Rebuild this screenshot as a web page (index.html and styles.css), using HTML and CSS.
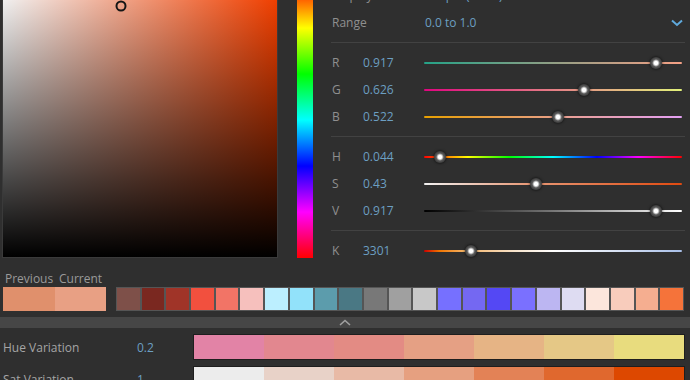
FILE: index.html
```html
<!DOCTYPE html>
<html lang="en">
<head>
    <meta charset="UTF-8">
    <meta name="viewport" content="width=device-width, initial-scale=1.0">
    <title>Color Picker</title>
    <link rel="stylesheet" href="styles.css">
</head>
<body>
    <div class="editor">
        <div class="top">
            <div class="sv">
                <span class="sv-cursor" style="left: 43%; top: 8.3%"></span>
            </div>
            <div class="hue"></div>
            <div class="props">
                <div class="prow">
                    <span class="plabel wide">Display</span>
                    <span class="pvalue">Simple (sRGB)</span>
                </div>
                <div class="prow">
                    <span class="plabel wide">Range</span>
                    <span class="pvalue grow">0.0 to 1.0</span>
                    <svg class="chevron" width="12" height="8" viewBox="0 0 12 8">
                        <polyline points="1,1.5 6,6 11,1.5" fill="none" stroke="#5fa9dc" stroke-width="2"/>
                    </svg>
                </div>
                <div class="divider"></div>
                <div class="prow">
                    <span class="plabel">R</span>
                    <span class="pvalue num">0.917</span>
                    <div class="slider track-r"><span class="thumb" style="--v: 0.917"></span></div>
                </div>
                <div class="prow">
                    <span class="plabel">G</span>
                    <span class="pvalue num">0.626</span>
                    <div class="slider track-g"><span class="thumb" style="--v: 0.626"></span></div>
                </div>
                <div class="prow">
                    <span class="plabel">B</span>
                    <span class="pvalue num">0.522</span>
                    <div class="slider track-b"><span class="thumb" style="--v: 0.522"></span></div>
                </div>
                <div class="divider"></div>
                <div class="prow">
                    <span class="plabel">H</span>
                    <span class="pvalue num">0.044</span>
                    <div class="slider track-h"><span class="thumb" style="--v: 0.044"></span></div>
                </div>
                <div class="prow">
                    <span class="plabel">S</span>
                    <span class="pvalue num">0.43</span>
                    <div class="slider track-s"><span class="thumb" style="--v: 0.43"></span></div>
                </div>
                <div class="prow">
                    <span class="plabel">V</span>
                    <span class="pvalue num">0.917</span>
                    <div class="slider track-v"><span class="thumb" style="--v: 0.917"></span></div>
                </div>
                <div class="divider"></div>
                <div class="prow">
                    <span class="plabel">K</span>
                    <span class="pvalue num">3301</span>
                    <div class="slider track-k"><span class="thumb" style="--v: 0.17"></span></div>
                </div>
            </div>
        </div>

        <div class="history">
            <div class="prevcur">
                <div class="pc-labels">
                    <span class="pc-label first">Previous</span>
                    <span class="pc-label">Current</span>
                </div>
                <div class="pc-box">
                    <div class="prev"></div>
                    <div class="cur"></div>
                </div>
            </div>
            <div class="swatches">
                <div class="swatch" style="background: #7e5049"></div>
                <div class="swatch" style="background: #7a2820"></div>
                <div class="swatch" style="background: #a03428"></div>
                <div class="swatch" style="background: #f2503e"></div>
                <div class="swatch" style="background: #f27466"></div>
                <div class="swatch" style="background: #f6c0bd"></div>
                <div class="swatch" style="background: #bcefff"></div>
                <div class="swatch" style="background: #92e2fa"></div>
                <div class="swatch" style="background: #5c9cac"></div>
                <div class="swatch" style="background: #4a7884"></div>
                <div class="swatch" style="background: #787878"></div>
                <div class="swatch" style="background: #a0a0a0"></div>
                <div class="swatch" style="background: #c8c8c8"></div>
                <div class="swatch" style="background: #7670ff"></div>
                <div class="swatch" style="background: #7468f2"></div>
                <div class="swatch" style="background: #5448f4"></div>
                <div class="swatch" style="background: #7a70ff"></div>
                <div class="swatch" style="background: #bcb6f2"></div>
                <div class="swatch" style="background: #dedcf2"></div>
                <div class="swatch" style="background: #fce6dc"></div>
                <div class="swatch" style="background: #f8ccbc"></div>
                <div class="swatch" style="background: #f5ae90"></div>
                <div class="swatch" style="background: #f5733a"></div>
            </div>
        </div>

        <div class="collapse">
            <svg width="12" height="7" viewBox="0 0 12 7">
                <polyline points="1,6 6,1.5 11,6" fill="none" stroke="#a0a0a0" stroke-width="1.6"/>
            </svg>
        </div>

        <div class="variations">
            <div class="vrow">
                <span class="vlabel">Hue Variation</span>
                <span class="vvalue">0.2</span>
                <div class="vbar">
                    <div style="background: #e283a6"></div>
                    <div style="background: #e2878f"></div>
                    <div style="background: #e38b84"></div>
                    <div style="background: #e5a084"></div>
                    <div style="background: #e6b485"></div>
                    <div style="background: #e5c886"></div>
                    <div style="background: #e8dc7e"></div>
                </div>
            </div>
            <div class="vrow">
                <span class="vlabel">Sat Variation</span>
                <span class="vvalue">1</span>
                <div class="vbar">
                    <div style="background: #ececec"></div>
                    <div style="background: #e8d2c8"></div>
                    <div style="background: #e8baa6"></div>
                    <div style="background: #e6a080"></div>
                    <div style="background: #e38256"></div>
                    <div style="background: #e0682e"></div>
                    <div style="background: #dd4800"></div>
                </div>
            </div>
        </div>
    </div>
</body>
</html>
```

FILE: styles.css
```css
body {
    margin: 0;
    background: #2f2f2f;
    font-family: "Open Sans", "Noto Sans", sans-serif;
    font-size: 12px;
    color: #999;
    overflow: hidden;
}
.editor {
    margin-top: -18px;
}

/* picker area */
.top {
    display: flex;
    height: 276px;
    padding-left: 2px;
}
.sv {
    position: relative;
    box-sizing: border-box;
    width: 276px;
    height: 276px;
    border: 1px solid #3a3a3a;
    background:
        linear-gradient(to top, #000, rgba(0,0,0,0)),
        linear-gradient(to right, #fff, #ff4300);
}
.sv-cursor {
    position: absolute;
    box-sizing: border-box;
    width: 11px;
    height: 11px;
    border: 2px solid #151515;
    border-radius: 50%;
    transform: translate(-50%, -50%);
}
.hue {
    width: 16px;
    height: 276px;
    margin-left: 19px;
    background: linear-gradient(to bottom, #f00, #ff0, #0f0, #0ff, #00f, #f0f, #f00);
}
.props {
    width: 354px;
    margin-left: 18px;
}
.prow {
    display: flex;
    align-items: center;
    height: 27px;
}
.plabel {
    width: 31px;
    padding-left: 1px;
    color: #8f8f8f;
}
.plabel.wide {
    width: 93px;
}
.pvalue {
    color: #6c9fc2;
}
.pvalue.num {
    width: 61px;
}
.pvalue.grow {
    flex: 1;
}
.chevron {
    margin-right: 2px;
}
.divider {
    height: 1px;
    margin: 6px 0;
    background: #424242;
}

/* sliders */
.slider {
    position: relative;
    width: 258px;
    height: 2px;
    border-radius: 1px;
}
.thumb {
    position: absolute;
    top: 1px;
    left: calc(5px + var(--v) * (100% - 10px));
    width: 12px;
    height: 12px;
    border-radius: 50%;
    background: radial-gradient(circle, #fff 0, #fff 1.8px, #b0b0b0 2.8px, #5c5c5c 3.8px, #383838 6px);
    box-shadow: 0 0 3px rgba(0,0,0,0.85);
    transform: translate(-50%, -50%);
}
.track-r { background: linear-gradient(to right, #25a287, #9c9f85 55%, #f5a085); }
.track-g { background: linear-gradient(to right, #e0067f, #e58a86 55%, #e2f27a); }
.track-b { background: linear-gradient(to right, #e8a000, #eaa0a0 60%, #e4a0f4); }
.track-h { background: linear-gradient(to right, #f00, #ff0 17%, #0f0 33%, #0ff 50%, #00f 67%, #f0f 83%, #f00); }
.track-s { background: linear-gradient(to right, #f2f2f2, #e89a78 40%, #e04a10); }
.track-v { background: linear-gradient(to right, #000, #777 50%, #fff); }
.track-k { background: linear-gradient(to right, #cc0000, #f07400 6%, #f4b060 15%, #f8e4cc 35%, #fff 50%, #d8e2f4 75%, #a8bfe8); }

/* previous / current + saved swatches */
.history {
    display: flex;
    align-items: flex-end;
    margin-top: 12px;
}
.prevcur {
    width: 103px;
    margin-left: 3px;
}
.pc-labels {
    display: flex;
    height: 16px;
    align-items: center;
    white-space: nowrap;
}
.pc-label {
    padding-left: 2px;
    color: #9a9a9a;
}
.pc-label.first {
    box-sizing: border-box;
    width: 54px;
}
.pc-box {
    display: flex;
    width: 103px;
    height: 24px;
    margin-top: 1px;
}
.prev {
    flex: 1;
    background: #e0906c;
}
.cur {
    flex: 1;
    background: #e8a084;
}
.swatches {
    display: grid;
    grid-template-columns: repeat(23, 1fr);
    width: 568px;
    height: 24px;
    margin-left: 10px;
}
.swatch {
    border: 1px solid #555;
}

.collapse {
    display: flex;
    justify-content: center;
    align-items: center;
    height: 11px;
    margin-top: 6px;
    background: #464646;
}

/* variations */
.variations {
    display: flex;
    flex-direction: column;
    gap: 6px;
    margin-top: 6px;
}
.vrow {
    display: flex;
    align-items: center;
}
.vlabel {
    width: 134px;
    padding-left: 3px;
    color: #a5a5a5;
}
.vvalue {
    width: 56px;
    color: #6c9fc2;
}
.vbar {
    display: grid;
    grid-template-columns: repeat(7, 1fr);
    box-sizing: border-box;
    width: 492px;
    height: 26px;
    border: 1px solid rgba(0,0,0,0.35);
}
```
